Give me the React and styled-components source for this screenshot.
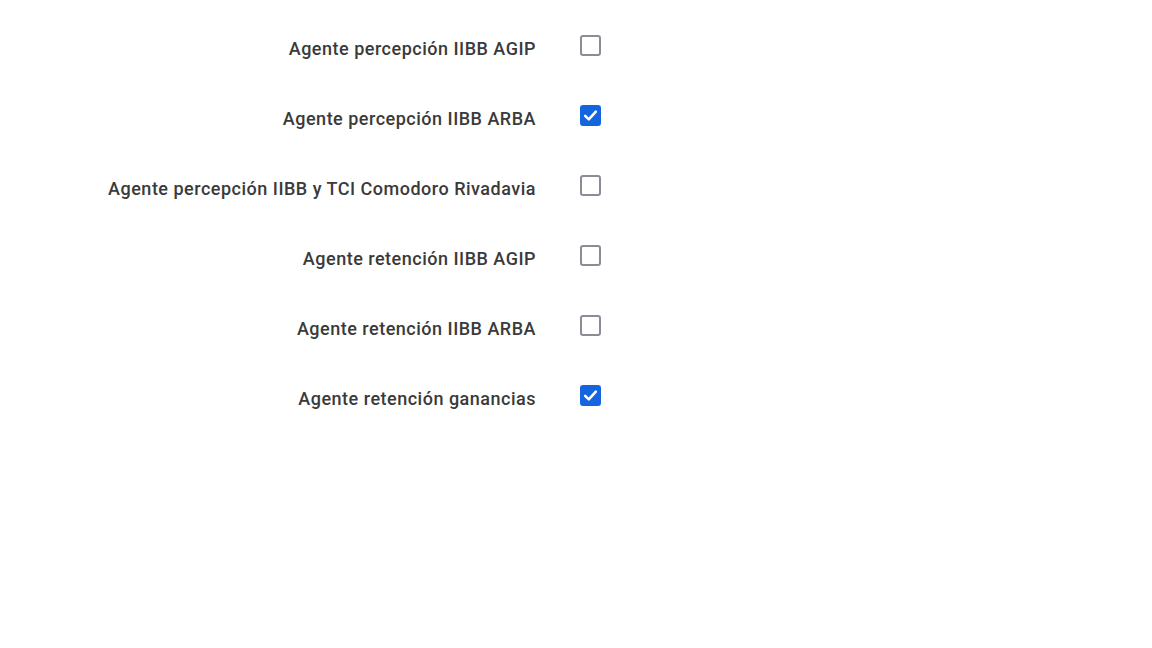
import React from 'react';
import styled, { createGlobalStyle } from 'styled-components';

const GlobalStyle = createGlobalStyle`
  html, body {
    margin: 0;
    padding: 0;
    background: #ffffff;
  }
  body {
    font-family: Roboto, "Liberation Sans", sans-serif;
  }
`;

const Form = styled.div`
  padding-top: 10px;
  display: flex;
  flex-direction: column;
`;

const Row = styled.label`
  display: grid;
  grid-template-columns: 536px 21px;
  column-gap: 44px;
  align-items: center;
  height: 70px;
  cursor: pointer;
`;

const Label = styled.span`
  text-align: right;
  font-size: 18px;
  font-weight: 500;
  letter-spacing: 0.5px;
  color: #3a3a3a;
  white-space: nowrap;
  padding-top: 6px;
`;

const Box = styled.span`
  box-sizing: border-box;
  width: 21px;
  height: 21px;
  border-radius: 3px;
  border: 2px solid ${(p) => (p.checked ? '#1565e0' : '#8c8c99')};
  background: ${(p) => (p.checked ? '#1565e0' : '#ffffff')};
  display: flex;
  align-items: center;
  justify-content: center;
`;

const Check = () => (
  <svg width="15" height="15" viewBox="0 0 14 14" fill="none">
    <path d="M2 7.4 L5.4 10.6 L12 3.4" stroke="#ffffff" strokeWidth="2.4" strokeLinecap="round" strokeLinejoin="round" />
  </svg>
);

const items = [
  { label: 'Agente percepción IIBB AGIP', checked: false },
  { label: 'Agente percepción IIBB ARBA', checked: true },
  { label: 'Agente percepción IIBB y TCI Comodoro Rivadavia', checked: false },
  { label: 'Agente retención IIBB AGIP', checked: false },
  { label: 'Agente retención IIBB ARBA', checked: false },
  { label: 'Agente retención ganancias', checked: true },
];

const App = () => (
  <>
    <GlobalStyle />
    <Form>
      {items.map((item) => (
        <Row key={item.label}>
          <Label>{item.label}</Label>
          <Box checked={item.checked}>{item.checked && <Check />}</Box>
        </Row>
      ))}
    </Form>
  </>
);

export default App;
